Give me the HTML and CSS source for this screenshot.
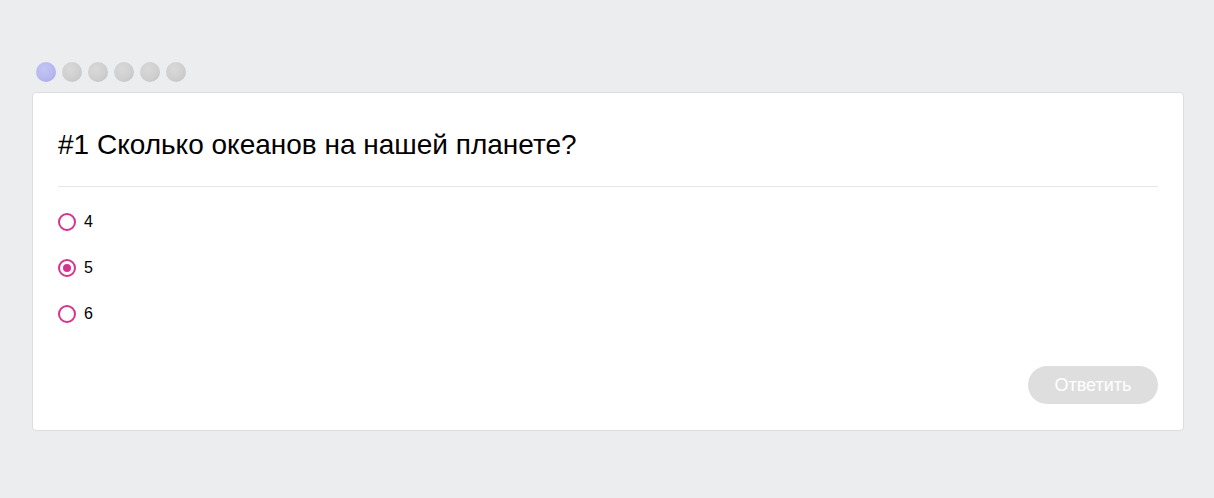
FILE: index.html
```html
<!DOCTYPE html>
<html lang="ru">
<head>
<meta charset="utf-8">
<link rel="stylesheet" href="styles.css">
</head>
<body>
<div class="quiz">
  <div class="steps">
    <span class="step step-active"></span>
    <span class="step"></span>
    <span class="step"></span>
    <span class="step"></span>
    <span class="step"></span>
    <span class="step"></span>
  </div>
  <div class="card">
    <h1 class="question">#1 Сколько океанов на нашей планете?</h1>
    <div class="options">
      <label class="option"><span class="radio"></span><span class="option-text">4</span></label>
      <label class="option"><span class="radio radio-checked"></span><span class="option-text">5</span></label>
      <label class="option"><span class="radio"></span><span class="option-text">6</span></label>
    </div>
    <div class="actions">
      <button class="submit">Ответить</button>
    </div>
  </div>
</div>
</body>
</html>
```

FILE: styles.css
```css
html, body {
  margin: 0;
  padding: 0;
}
body {
  background: #ecedef;
  font-family: "Liberation Sans", Arial, sans-serif;
  color: #000;
  width: 1214px;
  height: 498px;
  overflow: hidden;
}
.quiz {
  padding: 62px 30px 0 32px;
}
.steps {
  display: flex;
  gap: 6px;
  padding-left: 4px;
  margin-bottom: 10px;
}
.step {
  width: 20px;
  height: 20px;
  border-radius: 50%;
  background: radial-gradient(circle at 40% 35%, #d9d9d9 0%, #cfcfcf 55%, #bdbdbd 100%);
}
.step-active {
  background: radial-gradient(circle at 40% 35%, #c4c5f4 0%, #b6b8ee 55%, #a0a2e2 100%);
}
.card {
  background: #fff;
  border: 1px solid #dcdde0;
  border-radius: 4px;
  padding: 0 25px 26px 25px;
  height: 311px;
  box-sizing: content-box;
  display: flex;
  flex-direction: column;
}
.question {
  margin: 0;
  padding: 36px 0 25px;
  font-size: 28px;
  font-weight: normal;
  line-height: 32px;
  border-bottom: 1px solid #e6e6e6;
}
.options {
  display: flex;
  flex-direction: column;
  gap: 28px;
  padding-top: 26px;
}
.option {
  display: flex;
  align-items: center;
  gap: 8px;
  font-size: 16px;
  line-height: 18px;
}
.radio {
  width: 14px;
  height: 14px;
  border: 2px solid #d6338f;
  border-radius: 50%;
  box-sizing: content-box;
  display: flex;
  align-items: center;
  justify-content: center;
}
.radio-checked::after {
  content: "";
  width: 8px;
  height: 8px;
  border-radius: 50%;
  background: #d6338f;
}
.actions {
  margin-top: auto;
  display: flex;
  justify-content: flex-end;
}
.submit {
  width: 130px;
  height: 38px;
  border: none;
  border-radius: 19px;
  background: #dedede;
  color: #fff;
  font-family: "Liberation Sans", Arial, sans-serif;
  font-size: 18px;
}
```
